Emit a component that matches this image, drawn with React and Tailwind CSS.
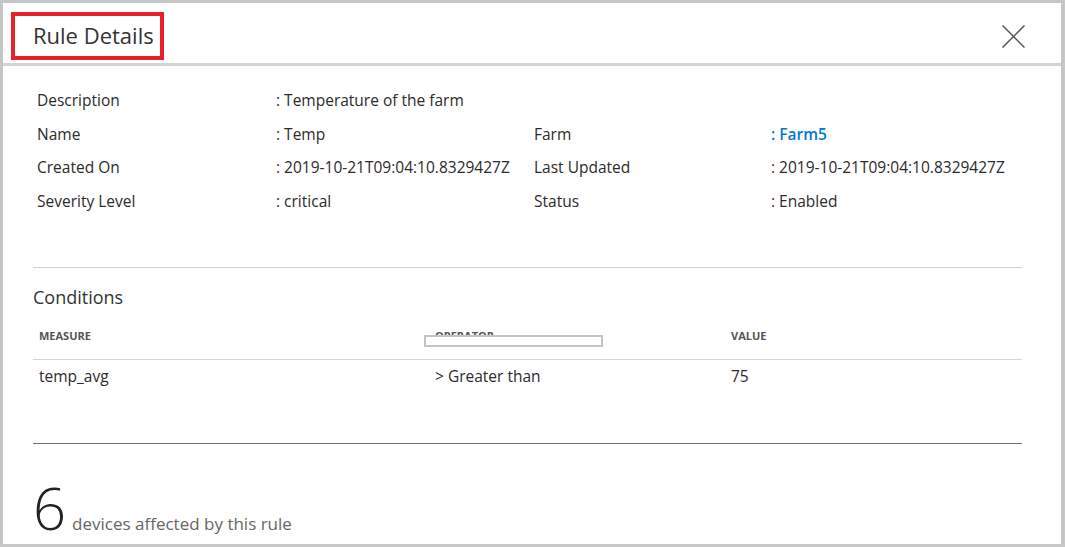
import React from "react";

const font = { fontFamily: '"Open Sans", "Noto Sans", "Liberation Sans", sans-serif' };

function Row({ l1, v1, l2, v2, blue }) {
  return (
    <div className="grid grid-cols-[239px_258px_237px_1fr] h-[33.5px] items-center text-[15.5px] text-[#2b2b2b]">
      <div>{l1}</div>
      <div>{v1}</div>
      <div>{l2}</div>
      <div className={blue ? "text-[#0078d4] font-semibold" : ""}>{v2}</div>
    </div>
  );
}

export default function App() {
  return (
    <div
      className="w-[1065px] h-[547px] bg-white overflow-hidden border-l-[3px] border-t-[3px] border-r-4 border-b-[3px] border-[#c6c6c6] flex flex-col"
      style={font}
    >
      <div className="h-[63px] shrink-0 flex items-start justify-between border-b-[3px] border-[#d4d4d4]">
        <div className="ml-[8px] mt-[9px] w-[153px] h-[48px] border-4 border-[#e8202a] flex items-center pl-[18px] pb-[2px] text-[22px] text-[#333]">
          Rule Details
        </div>
        <svg className="mt-[22px] mr-[36px]" width="23" height="23" viewBox="0 0 23 23">
          <path d="M0.5 0.5 L22.5 22.5 M22.5 0.5 L0.5 22.5" stroke="#555" strokeWidth="1.5" fill="none" />
        </svg>
      </div>

      <div className="pl-[30px] pr-[39px] pt-[18px] flex flex-col">
        <div className="pl-[4px]">
          <Row l1="Description" v1=": Temperature of the farm" />
          <Row l1="Name" v1=": Temp" l2="Farm" v2=": Farm5" blue />
          <Row l1="Created On" v1=": 2019-10-21T09:04:10.8329427Z" l2="Last Updated" v2=": 2019-10-21T09:04:10.8329427Z" />
          <Row l1="Severity Level" v1=": critical" l2="Status" v2=": Enabled" />
        </div>

        <div className="mt-[49px] border-t border-[#d0d0d0]" />

        <div className="mt-[17px] h-[24px] leading-[24px] text-[18px] text-[#333]">Conditions</div>

        <div className="h-[51px] flex items-end pb-[15px] border-b border-[#d6d6d6] text-[11px] leading-[16px] font-bold text-[#555]">
          <div className="pl-[6px] w-[402px]">MEASURE</div>
          <div className="relative w-[296px]">
            <span>OPERATOR</span>
            <div className="absolute left-[-11px] top-[7px] w-[179px] h-[12px] border-2 border-[#c4c4c4] bg-white" />
          </div>
          <div>VALUE</div>
        </div>

        <div className="h-[34px] flex items-center text-[15.5px] text-[#2b2b2b]">
          <div className="pl-[6px] w-[402px]">temp_avg</div>
          <div className="w-[296px]">&gt; Greater than</div>
          <div>75</div>
        </div>

        <div className="mt-[49px] border-t border-[#707070]" />

        <div className="mt-[35px] flex items-baseline">
          <span className="text-[58px] leading-none font-light text-[#222]">6</span>
          <span className="ml-[6px] text-[17px] text-[#666]">devices affected by this rule</span>
        </div>
      </div>
    </div>
  );
}
